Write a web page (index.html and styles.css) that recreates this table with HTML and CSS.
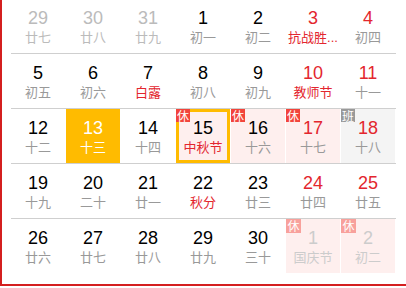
FILE: index.html
```html
<!DOCTYPE html>
<html lang="zh-CN">
<head>
<meta charset="utf-8">
<title>日历</title>
<link rel="stylesheet" href="styles.css">
</head>
<body>
<div class="cal">
  <div class="row">
    <div class="cell prev"><span class="num">29</span><span class="lunar">廿七</span></div>
    <div class="cell prev"><span class="num">30</span><span class="lunar">廿八</span></div>
    <div class="cell prev"><span class="num">31</span><span class="lunar">廿九</span></div>
    <div class="cell"><span class="num">1</span><span class="lunar">初一</span></div>
    <div class="cell"><span class="num">2</span><span class="lunar">初二</span></div>
    <div class="cell wk"><span class="num">3</span><span class="lunar fest">抗战胜...</span></div>
    <div class="cell wk"><span class="num">4</span><span class="lunar">初四</span></div>
  </div>
  <div class="row">
    <div class="cell"><span class="num">5</span><span class="lunar">初五</span></div>
    <div class="cell"><span class="num">6</span><span class="lunar">初六</span></div>
    <div class="cell"><span class="num">7</span><span class="lunar fest">白露</span></div>
    <div class="cell"><span class="num">8</span><span class="lunar">初八</span></div>
    <div class="cell"><span class="num">9</span><span class="lunar">初九</span></div>
    <div class="cell wk"><span class="num">10</span><span class="lunar fest">教师节</span></div>
    <div class="cell wk"><span class="num">11</span><span class="lunar">十一</span></div>
  </div>
  <div class="row">
    <div class="cell"><span class="num">12</span><span class="lunar">十二</span></div>
    <div class="cell today"><span class="num">13</span><span class="lunar">十三</span></div>
    <div class="cell"><span class="num">14</span><span class="lunar">十四</span></div>
    <div class="cell rest sel"><span class="badge">休</span><span class="num">15</span><span class="lunar fest">中秋节</span></div>
    <div class="cell rest"><span class="badge">休</span><span class="num">16</span><span class="lunar">十六</span></div>
    <div class="cell rest wk"><span class="badge">休</span><span class="num">17</span><span class="lunar">十七</span></div>
    <div class="cell work wk"><span class="badge badge-work">班</span><span class="num">18</span><span class="lunar">十八</span></div>
  </div>
  <div class="row">
    <div class="cell"><span class="num">19</span><span class="lunar">十九</span></div>
    <div class="cell"><span class="num">20</span><span class="lunar">二十</span></div>
    <div class="cell"><span class="num">21</span><span class="lunar">廿一</span></div>
    <div class="cell"><span class="num">22</span><span class="lunar fest">秋分</span></div>
    <div class="cell"><span class="num">23</span><span class="lunar">廿三</span></div>
    <div class="cell wk"><span class="num">24</span><span class="lunar">廿四</span></div>
    <div class="cell wk"><span class="num">25</span><span class="lunar">廿五</span></div>
  </div>
  <div class="row">
    <div class="cell"><span class="num">26</span><span class="lunar">廿六</span></div>
    <div class="cell"><span class="num">27</span><span class="lunar">廿七</span></div>
    <div class="cell"><span class="num">28</span><span class="lunar">廿八</span></div>
    <div class="cell"><span class="num">29</span><span class="lunar">廿九</span></div>
    <div class="cell"><span class="num">30</span><span class="lunar">三十</span></div>
    <div class="cell rest next"><span class="badge badge-fade">休</span><span class="num">1</span><span class="lunar">国庆节</span></div>
    <div class="cell rest next"><span class="badge badge-fade">休</span><span class="num">2</span><span class="lunar">初二</span></div>
  </div>
</div>
</body>
</html>
```

FILE: styles.css
```css
html, body {
  margin: 0;
  padding: 0;
  background: #fff;
}

.cal {
  margin-top: -1px;
  height: 274px;
  padding: 0 10px 11px 9px;
  border-left: 2px solid #d41f1f;
  border-bottom: 2px solid #d41f1f;
  font-family: "Liberation Sans", "Noto Sans CJK SC", sans-serif;
}

.row {
  display: grid;
  grid-template-columns: repeat(7, 54px);
  column-gap: 1px;
  width: 385px;
  height: 54px;
  border-bottom: 1px solid #cfcfcf;
}

.row:last-child {
  border-bottom: none;
}

.cell {
  position: relative;
  display: flex;
  flex-direction: column;
  align-items: center;
  padding-top: 9px;
  box-sizing: border-box;
  height: 54px;
  color: #000;
}

.num {
  font-size: 18px;
  line-height: 20px;
}

.lunar {
  font-size: 13px;
  line-height: 20px;
  color: #999;
  white-space: nowrap;
}

.wk .num {
  color: #e3262e;
}

.lunar.fest {
  color: #e3262e;
}

.prev .num,
.prev .lunar {
  color: #bbb;
}

.next .num,
.next .lunar {
  color: #ccc;
}

.today {
  background: #ffbb00;
}

.today .num,
.today .lunar {
  color: #fff;
}

.rest {
  background: #feefee;
}

.work {
  background: #f4f4f4;
}

.sel {
  box-shadow: inset 0 0 0 3px #ffbb00;
}

.badge {
  position: absolute;
  left: 0;
  top: 0;
  width: 14px;
  height: 13px;
  background: #f2443b;
  color: #fff;
  font-family: "Noto Sans CJK SC", sans-serif;
  font-size: 12px;
  line-height: 13px;
  text-align: center;
}

.badge-work {
  background: #999;
}

.badge-fade {
  background: #f8a19c;
  width: 15px;
  height: 14px;
  line-height: 14px;
}
```
